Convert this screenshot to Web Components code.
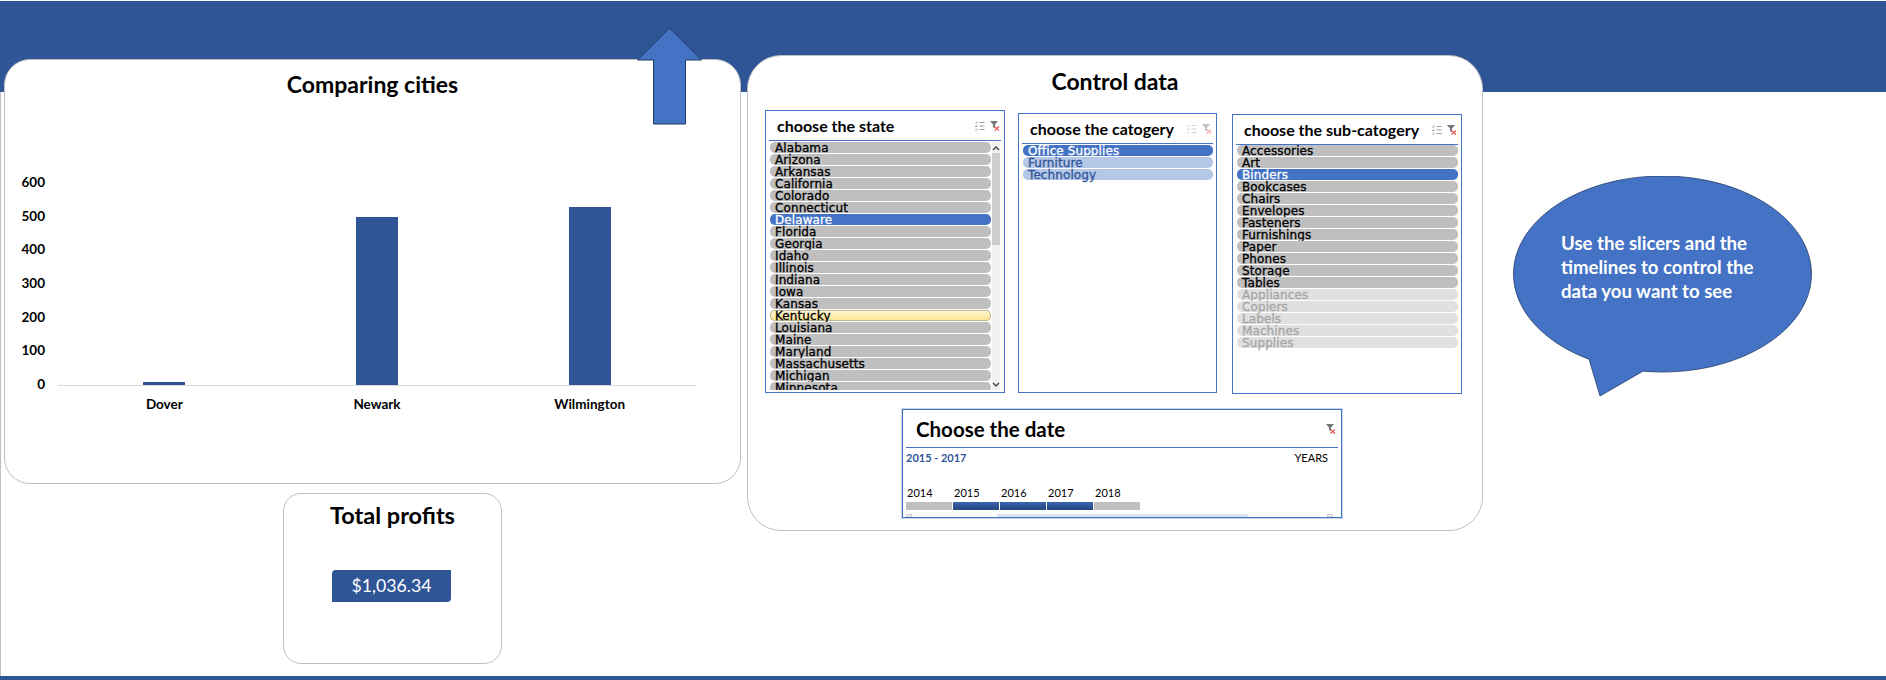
<!DOCTYPE html>
<html lang="en"><head><meta charset="utf-8"><title>Dashboard</title>
<style>html,body{margin:0;padding:0;background:#fff}</style></head><body>
<dash-page>
  <div slot="left">
    <dash-card heading="Comparing cities" style="--w:737px;--h:425px;--r:26px;--title-h:48px;--title-fs:23px"><bar-chart></bar-chart></dash-card>
    <dash-card heading="Total profits" style="--w:219px;--h:171px;--r:18px;--title-h:43px;--title-fs:23.500px;--ml:279px;--mt:9px"><profit-badge>$1,036.34</profit-badge></dash-card>
  </div>
  <dash-card slot="middle" heading="Control data" style="--w:736px;--h:476px;--r:34px;--title-h:50px;--title-fs:23px">
    <control-body>
      <dash-slicer heading="choose the state" scroll style="--w:240px;--h:283px;--mt:4px;--head:30px;--ipr:5px"><slicer-item>Alabama</slicer-item><slicer-item>Arizona</slicer-item><slicer-item>Arkansas</slicer-item><slicer-item>California</slicer-item><slicer-item>Colorado</slicer-item><slicer-item>Connecticut</slicer-item><slicer-item state="on">Delaware</slicer-item><slicer-item>Florida</slicer-item><slicer-item>Georgia</slicer-item><slicer-item>Idaho</slicer-item><slicer-item>Illinois</slicer-item><slicer-item>Indiana</slicer-item><slicer-item>Iowa</slicer-item><slicer-item>Kansas</slicer-item><slicer-item state="hover">Kentucky</slicer-item><slicer-item>Louisiana</slicer-item><slicer-item>Maine</slicer-item><slicer-item>Maryland</slicer-item><slicer-item>Massachusetts</slicer-item><slicer-item>Michigan</slicer-item><slicer-item>Minnesota</slicer-item></dash-slicer>
      <dash-slicer heading="choose the catogery" style="--w:199px;--h:280px;--mt:7px;--head:30px;--ml:13px;--ipr:2px;--faint:.45"><slicer-item state="on">Office Supplies</slicer-item><slicer-item state="soft">Furniture</slicer-item><slicer-item state="soft">Technology</slicer-item></dash-slicer>
      <dash-slicer heading="choose the sub-catogery" style="--w:230px;--h:280px;--mt:8px;--head:30px;--ml:15px;--ipr:3px;--gap-top:0px"><slicer-item>Accessories</slicer-item><slicer-item>Art</slicer-item><slicer-item state="on">Binders</slicer-item><slicer-item>Bookcases</slicer-item><slicer-item>Chairs</slicer-item><slicer-item>Envelopes</slicer-item><slicer-item>Fasteners</slicer-item><slicer-item>Furnishings</slicer-item><slicer-item>Paper</slicer-item><slicer-item>Phones</slicer-item><slicer-item>Storage</slicer-item><slicer-item>Tables</slicer-item><slicer-item state="off">Appliances</slicer-item><slicer-item state="off">Copiers</slicer-item><slicer-item state="off">Labels</slicer-item><slicer-item state="off">Machines</slicer-item><slicer-item state="off">Supplies</slicer-item></dash-slicer>
    </control-body>
    <dash-timeline></dash-timeline>
  </dash-card>
  <dash-callout slot="right">Use the slicers and the timelines to control the data you want to see</dash-callout>
</dash-page>
<script>
const FONT='Lato,"Open Sans","Liberation Sans",sans-serif';
function def(name,html,extra){
  const t=document.createElement('template');t.innerHTML=html;
  customElements.define(name,class extends HTMLElement{
    constructor(){super();this.attachShadow({mode:'open'}).appendChild(t.content.cloneNode(true));}
    connectedCallback(){if(extra)extra(this,this.shadowRoot);}
  });
}
def('dash-page',`<style>
:host{display:flex;flex-direction:column;position:relative;width:1886px;height:680px;overflow:hidden;font-family:${FONT};
background:linear-gradient(#2f5597,#2f5597) 0 1px/100% 91px no-repeat,linear-gradient(#bfbfbf,#bfbfbf) 0 92px/1px 100% no-repeat,#fff}
.main{display:flex;height:676px;padding-left:4px;box-sizing:border-box}
.left{margin-top:59px;width:737px}
.mid{margin-top:55px;margin-left:6px}
.right{margin-top:176px;margin-left:30px}
.foot{height:4px;background:#2f5597}
svg{position:absolute;left:636px;top:27px}
</style>
<div class="main"><div class="left"><slot name="left"></slot></div><div class="mid"><slot name="middle"></slot></div><div class="right"><slot name="right"></slot></div></div>
<div class="foot"></div>
<svg width="68" height="99" viewBox="0 0 68 99"><path d="M33.500 1 L65.500 33 L49.500 33 L49.500 97 L17.500 97 L17.500 33 L1.500 33 Z" fill="#4472c4" stroke="#1f3864" stroke-width="1"/></svg>`);
def('dash-card',`<style>
:host{display:block;box-sizing:border-box;width:var(--w);height:var(--h);margin-left:var(--ml,0);margin-top:var(--mt,0);background:#fff;border:1px solid #bfbfbf;border-radius:var(--r)}
.t{height:var(--title-h);line-height:var(--title-h);text-align:center;font-size:var(--title-fs);font-weight:700;color:#000}
</style><div class="t"></div><slot></slot>`,(el,s)=>{s.querySelector('.t').textContent=el.getAttribute('heading');});
def('bar-chart',`<style>
:host{display:grid;grid-template-columns:40px 638px;grid-template-rows:210px auto;column-gap:13px;margin-top:67px;color:#000;font-size:13.500px;font-weight:700}
.axis{grid-row:1/3;height:216px;display:flex;flex-direction:column;justify-content:space-between;text-align:right;line-height:14px}
.plot{display:flex;align-items:flex-end;box-sizing:content-box;height:210px;border-bottom:1px solid #d9d9d9}
.cell{flex:1;display:flex;justify-content:center;align-items:flex-end}
.bar{width:42px;background:#2f5597}
.cats{display:flex;margin-top:11px;line-height:16px;text-align:center}
.cats div{flex:1}
</style>
<div class="axis"><div>600</div><div>500</div><div>400</div><div>300</div><div>200</div><div>100</div><div>0</div></div>
<div class="plot"><div class="cell"><div class="bar" style="height:3px"></div></div><div class="cell"><div class="bar" style="height:168px"></div></div><div class="cell"><div class="bar" style="height:178px"></div></div></div>
<div class="cats"><div>Dover</div><div>Newark</div><div>Wilmington</div></div>`);
def('profit-badge',`<style>
:host{display:block;box-sizing:border-box;width:119px;height:32px;margin:33px 0 0 48px;background:#2f5597;color:#fff;font-size:17.700px;line-height:32px;text-align:center;border-radius:4px 0 4px 0}
</style><slot></slot>`);
def('control-body',`<style>:host{display:flex;align-items:flex-start;margin:0 0 0 17px}</style><slot></slot>`);
const ICONS=`<svg width="10" height="10" viewBox="0 0 10 10"><path d="M0 1.500l1 1 1.500-2M0 5l1 1 1.500-2M0 8.500l1 1 1.500-2" fill="none" stroke="#8c8c8c" stroke-width=".9"/><path d="M4.500 1.500h5M4.500 5h5M4.500 8.500h5" stroke="#9a9a9a" stroke-width="1"/></svg><svg class="f" width="10" height="10" viewBox="0 0 10 10"><path d="M0 0h8L5 3.500v3H3v-3z" fill="#777"/><path d="M4.500 5.500l4.500 4M9 5.500l-4.500 4" stroke="#e8564a" stroke-width="1.100"/></svg>`;
def('dash-slicer',`<style>
:host{display:flex;flex-direction:column;box-sizing:border-box;width:var(--w);height:var(--h);margin-top:var(--mt);margin-left:var(--ml,0);border:1px solid #4472c4;background:#fff;padding:0 3px}
.h{flex:none;display:flex;align-items:center;box-sizing:border-box;height:var(--head);padding:0 0 0 8px;border-bottom:1px solid #4472c4}
.t{flex:1;font-size:16px;font-weight:700;color:#000;white-space:nowrap}
svg{margin-left:5px;flex:none;opacity:var(--faint,1)}
.b{flex:1;display:flex;min-height:0;overflow:hidden;padding:var(--gap-top,1px) 0 2px 1px}
.l{flex:1;min-width:0;overflow:hidden;display:flex;flex-direction:column;gap:1px}
.s{display:none;flex:none;width:8px;margin:0 1px 0 1px;background:#f0f0f0;flex-direction:column}
:host([scroll]) .s{display:flex}
.s .a{height:11px;display:flex;align-items:center;justify-content:center;background:#f0f0f0}
.s .th{height:92px;background:#cdcdcd}
.s .sp{flex:1}
</style>
<div class="h"><div class="t"></div></div>
<div class="b"><div class="l"><slot></slot></div><div class="s"><div class="a"><svg style="margin:0" width="8" height="6" viewBox="0 0 8 6"><path d="M1 5l3-3 3 3" fill="none" stroke="#444" stroke-width="1.400"/></svg></div><div class="th"></div><div class="sp"></div><div class="a"><svg style="margin:0" width="8" height="6" viewBox="0 0 8 6"><path d="M1 1l3 3 3-3" fill="none" stroke="#444" stroke-width="1.400"/></svg></div></div></div>`,(el,s)=>{
  s.querySelector('.t').textContent=el.getAttribute('heading');
  s.querySelector('.h').insertAdjacentHTML('beforeend',ICONS+'<span style="width:1px"></span>');
});
def('slicer-item',`<style>
:host{display:block;position:relative;flex:none;box-sizing:border-box;height:11px;background:#bfbfbf;border-radius:5px;font:12px/12px "DejaVu Sans",sans-serif;-webkit-text-stroke:.3px currentColor;color:#000;padding-left:5px;white-space:nowrap;letter-spacing:.1px}
:host([state=on]){background:#4472c4;color:#fff}
:host([state=soft]){background:#b4c7e7;color:#2f5597}
:host([state=off]){background:#e0e0e0;color:#a6a6a6}
:host([state=hover]){background:linear-gradient(#fff9dc,#fde48c);box-shadow:inset 0 0 0 1px #bdb68e}
</style><slot></slot>`);
def('dash-timeline',`<style>
:host{display:block;box-sizing:border-box;width:440px;height:109px;margin:15px 0 0 154px;border:1px solid #4472c4;box-shadow:0 0 0 1px #c9d6ee;padding:0 3px;background:#fff;color:#000}
.h{display:flex;align-items:center;height:38px;box-sizing:border-box;padding-left:10px;border-bottom:1px solid #4472c4;font-size:20.500px;font-weight:700}
.h span{flex:1}
.r{display:flex;justify-content:space-between;height:19px;line-height:19px;padding-right:10px;font-size:11px}
.r b{color:#2f5597}
.y{display:flex;margin-top:19px;height:14px;line-height:14px;font-size:11px}
.y div{width:47px;padding-left:1px;box-sizing:border-box}
.g{display:flex;gap:1px;margin-top:2px;height:8px}
.g i{width:46px;background:#bfbfbf}
.g i.o{background:linear-gradient(#3b65ad,#24457f)}
.sb{display:flex;margin-top:4px;height:3px;align-items:stretch}
.sb u{display:block;width:6px;border:1px solid #ccc;box-sizing:border-box}
.sb .tr{margin-left:85px;width:251px;background:#d9e2f3}
.sb .sp{flex:1}
</style>
<div class="h"><span>Choose the date</span><svg width="10" height="10" viewBox="0 0 10 10" style="margin-right:2px"><path d="M0 0h8L5 3.500v3H3v-3z" fill="#777"/><path d="M4.500 5.500l4.500 4M9 5.500l-4.500 4" stroke="#e8564a" stroke-width="1.100"/></svg></div>
<div class="r"><b>2015 - 2017</b><span>YEARS</span></div>
<div class="y"><div>2014</div><div>2015</div><div>2016</div><div>2017</div><div>2018</div></div>
<div class="g"><i></i><i class="o"></i><i class="o"></i><i class="o"></i><i></i></div>
<div class="sb"><u></u><div class="tr"></div><div class="sp"></div><u style="margin-right:5px"></u></div>`);
def('dash-callout',`<style>
:host{display:grid;width:300px;height:222px;color:#fff;font-size:18.600px;font-weight:700;line-height:24px}
svg,.x{grid-area:1/1}
.x{padding:55px 30px 0 48px;box-sizing:border-box}
</style>
<svg width="300" height="222" viewBox="0 0 300 222"><path d="M76 183.250 L87 220 L130 195.160 A149 98 0 1 0 76 183.250 Z" fill="#4472c4" stroke="#203864" stroke-width=".75"/></svg>
<div class="x"><slot></slot></div>`);
</script>
</body></html>
